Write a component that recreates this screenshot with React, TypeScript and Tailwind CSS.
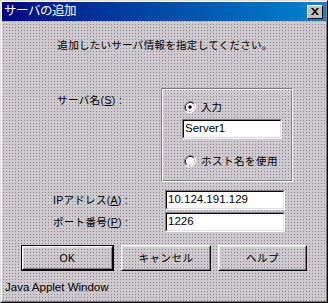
import React from 'react';

const JP = "font-['Liberation_Sans','Noto_Sans_CJK_JP',sans-serif]";

function Radio({ checked }: { checked?: boolean }) {
  return (
    <svg width="12" height="12" viewBox="0 0 12 12" className="shrink-0">
      <path d="M10.2 1.8A6 6 0 0 0 1.8 10.2" stroke="#808080" strokeWidth="1" fill="none" />
      <path d="M9.5 2.5A5 5 0 0 0 2.5 9.5" stroke="#000" strokeWidth="1" fill="none" />
      <circle cx="6" cy="6" r="4" fill="#fff" />
      <path d="M1.8 10.2A6 6 0 0 0 10.2 1.8" stroke="#fff" strokeWidth="1" fill="none" />
      {checked && <circle cx="6" cy="6" r="1.8" fill="#000" />}
    </svg>
  );
}

function Field({ value, className }: { value: string; className?: string }) {
  return (
    <div className={`h-[20px] border border-t-[#808080] border-l-[#808080] border-b-white border-r-white ${className ?? ''}`}>
      <div className="h-full border border-t-black border-l-black border-b-[#dfdfdf] border-r-[#dfdfdf] bg-white flex items-center pl-[1px]">
        <span className="font-['Liberation_Sans',sans-serif] text-[11.5px] leading-none text-black">{value}</span>
      </div>
    </div>
  );
}

function Button({ label, width, isDefault }: { label: string; width: string; isDefault?: boolean }) {
  return (
    <div className={`${width} h-[26px] ${isDefault ? 'border border-black' : ''}`}>
      <div className="h-full border border-t-white border-l-white border-b-black border-r-black">
        <div className="h-full border border-t-[#dfdfdf] border-l-[#dfdfdf] border-b-[#808080] border-r-[#808080] flex items-center justify-center">
          <span className={`${JP} text-[10.5px] leading-none text-black tracking-[0.5px]`}>{label}</span>
        </div>
      </div>
    </div>
  );
}

export default function App() {
  return (
    <div className="w-[328px] h-[303px] border border-t-[#dfdfdf] border-l-[#dfdfdf] border-b-black border-r-black">
      <div className="h-full border border-t-white border-l-white border-b-[#808080] border-r-[#808080] flex flex-col bg-[#cecbce] bg-[radial-gradient(circle,#8e808e_0.6px,transparent_0.8px)] bg-[length:3px_3px]">
        {/* Title bar */}
        <div className="h-[19px] bg-gradient-to-r from-[#000080] to-[#1084d0] flex items-center justify-between pl-[2px] pr-[3px]">
          <span className={`${JP} text-[12.5px] leading-none text-white tracking-[-0.5px]`}>サーバの追加</span>
          <div className="w-[16px] h-[14px] border border-t-white border-l-white border-b-black border-r-black bg-[#c0c0c0] flex items-center justify-center">
            <svg width="8" height="7" viewBox="0 0 8 7">
              <path d="M0 0h2l2 2.2L6 0h2L5 3.5 8 7H6L4 4.8 2 7H0l3-3.5z" fill="#000" />
            </svg>
          </div>
        </div>

        {/* Message */}
        <div className={`${JP} mt-[18px] text-center text-[10.5px] leading-[12px] tracking-[0.3px] text-black pl-[2px]`}>
          追加したいサーバ情報を指定してください。
        </div>

        {/* Server name group */}
        <div className="mt-[37px] flex">
          <div className={`${JP} ml-[55px] w-[104px] mt-[6px] text-[10.5px] leading-[12px] tracking-[0.4px] text-black`}>
            サーバ名(<span className="underline">S</span>) :
          </div>
          <div className="w-[132px] h-[94px] border border-t-[#808080] border-l-[#808080] border-b-white border-r-white">
            <div className="h-full border border-t-white border-l-white border-b-[#808080] border-r-[#808080] flex flex-col pl-[19px]">
              <div className="mt-[11px] flex items-center gap-[5px] pl-[2px]">
                <Radio checked />
                <span className={`${JP} text-[10.5px] leading-none text-black`}>入力</span>
              </div>
              <Field value="Server1" className="mt-[6px] w-[100px]" />
              <div className="mt-[16px] flex items-center gap-[5px] pl-[2px]">
                <Radio />
                <span className={`${JP} text-[10.5px] leading-none text-black tracking-[0.5px]`}>ホスト名を使用</span>
              </div>
            </div>
          </div>
        </div>

        {/* IP / Port */}
        <div className="mt-[8px] flex items-center">
          <div className={`${JP} ml-[51px] w-[112px] text-[10.5px] leading-none tracking-[0.3px] text-black`}>
            IPアドレス(<span className="underline">A</span>) :
          </div>
          <Field value="10.124.191.129" className="w-[120px]" />
        </div>
        <div className="mt-[2px] flex items-center">
          <div className={`${JP} ml-[51px] w-[112px] text-[10.5px] leading-none tracking-[0.3px] text-black`}>
            ポート番号(<span className="underline">P</span>) :
          </div>
          <Field value="1226" className="w-[120px]" />
        </div>

        {/* Buttons */}
        <div className="mt-[13px] ml-[19px] flex gap-[7px]">
          <Button label="OK" width="w-[93px]" isDefault />
          <Button label="キャンセル" width="w-[90px]" />
          <Button label="ヘルプ" width="w-[89px]" />
        </div>

        <div className="mt-[11px] ml-[3px] font-['Liberation_Sans',sans-serif] text-[11.5px] leading-none text-black">
          Java Applet Window
        </div>
      </div>
    </div>
  );
}
